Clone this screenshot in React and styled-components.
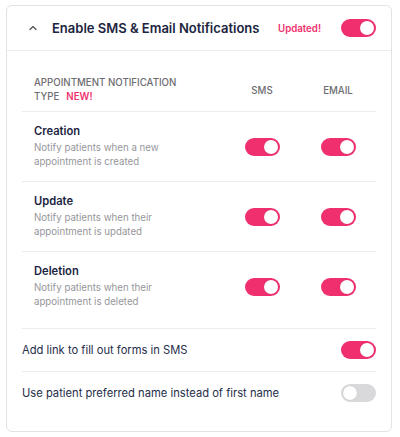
import React from "react";
import styled, { createGlobalStyle } from "styled-components";

const Global = createGlobalStyle`
  html, body { margin: 0; padding: 0; background: #fff; }
  body { font-family: "Inter", "Open Sans", sans-serif; -webkit-font-smoothing: antialiased; }
`;

const Page = styled.div`
  padding: 5px 8px 9px 6px;
`;

const Card = styled.div`
  border: 1px solid #e3e3e6;
  border-radius: 6px;
  background: #fff;
`;

const Header = styled.div`
  display: flex;
  align-items: center;
  height: 44px;
  padding: 0 15px 0 21px;
  border-bottom: 1px solid #ececee;
`;

const Chevron = styled.svg`
  width: 10px;
  height: 10px;
  margin-right: 14px;
`;

const Title = styled.div`
  font-size: 13px;
  font-weight: 600;
  color: #1b2440;
  flex: 1;
  white-space: nowrap;
`;

const Updated = styled.span`
  font-size: 9.7px;
  font-weight: 600;
  color: #f0306e;
  margin-right: 20px;
`;

const Body = styled.div`
  padding: 0 15px 17px 15px;
`;

const Grid = styled.div`
  display: grid;
  grid-template-columns: 1fr 76px 76px;
  align-items: center;
  padding: ${(p) => p.$pad};
  border-bottom: 1px solid #ececee;
`;

const HeadLabel = styled.div`
  font-size: 9.7px;
  font-weight: 500;
  color: #6d6d72;
  line-height: 14px;
  text-transform: uppercase;
  padding-left: 12px;
`;

const NewTag = styled.span`
  color: #f0306e;
  font-weight: 600;
  margin-left: 7px;
`;

const ColHead = styled.div`
  font-size: 9.7px;
  font-weight: 500;
  color: #6d6d72;
  text-align: center;
`;

const RowText = styled.div`
  padding-left: 12px;
`;

const RowTitle = styled.div`
  font-size: 11.2px;
  font-weight: 600;
  color: #1b2440;
  line-height: 15px;
  margin-bottom: 2px;
`;

const RowDesc = styled.div`
  font-size: 9.7px;
  color: #96969b;
  line-height: 14px;
  max-width: 140px;
`;

const Cell = styled.div`
  display: flex;
  justify-content: center;
`;

const OptionRow = styled.div`
  display: flex;
  align-items: center;
  justify-content: space-between;
  height: 42px;
  border-bottom: ${(p) => (p.$last ? "none" : "1px solid #ececee")};
  font-size: 11.2px;
  color: #262d4a;
`;

const Track = styled.div`
  width: 35px;
  height: 18px;
  border-radius: 9px;
  background: ${(p) => (p.$on ? "#f0306e" : "#d9d9dc")};
  display: flex;
  align-items: center;
  justify-content: ${(p) => (p.$on ? "flex-end" : "flex-start")};
  padding: 0 2px;
  box-sizing: border-box;
`;

const Knob = styled.div`
  width: 14px;
  height: 14px;
  border-radius: 50%;
  background: #fff;
  box-shadow: 0 0 1px rgba(0, 0, 0, 0.2);
`;

const Toggle = ({ on }) => (
  <Track $on={on}>
    <Knob />
  </Track>
);

const rows = [
  { t: "Creation", d: "Notify patients when a new appointment is created" },
  { t: "Update", d: "Notify patients when their appointment is updated" },
  { t: "Deletion", d: "Notify patients when their appointment is deleted" },
];

export default function App() {
  return (
    <Page>
      <Global />
      <Card>
        <Header>
          <Chevron viewBox="0 0 10 10">
            <path d="M2 6.5 L5 3.5 L8 6.5" fill="none" stroke="#555" strokeWidth="1.3" strokeLinecap="round" strokeLinejoin="round" />
          </Chevron>
          <Title>Enable SMS &amp; Email Notifications</Title>
          <Updated>Updated!</Updated>
          <Toggle on />
        </Header>
        <Body>
          <Grid $pad="25px 0 7px 0">
            <HeadLabel>
              Appointment notification
              <br />
              Type<NewTag>NEW!</NewTag>
            </HeadLabel>
            <ColHead>SMS</ColHead>
            <ColHead>EMAIL</ColHead>
          </Grid>
          {rows.map((r, i) => (
            <Grid key={r.t} $pad={i === 2 ? "12px 0 19px 0" : "12px 0 12px 0"}>
              <RowText>
                <RowTitle>{r.t}</RowTitle>
                <RowDesc>{r.d}</RowDesc>
              </RowText>
              <Cell>
                <Toggle on />
              </Cell>
              <Cell>
                <Toggle on />
              </Cell>
            </Grid>
          ))}
          <OptionRow>
            <span>Add link to fill out forms in SMS</span>
            <Toggle on />
          </OptionRow>
          <OptionRow $last>
            <span>Use patient preferred name instead of first name</span>
            <Toggle />
          </OptionRow>
        </Body>
      </Card>
    </Page>
  );
}
